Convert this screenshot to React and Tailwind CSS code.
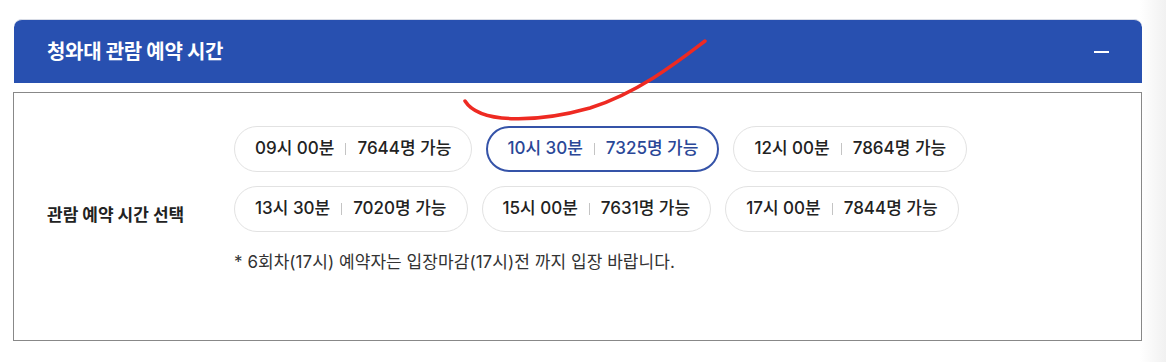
import React from "react";

const slots = [
  [
    { time: "09시 00분", count: "7644명 가능" },
    { time: "10시 30분", count: "7325명 가능", active: true },
    { time: "12시 00분", count: "7864명 가능" },
  ],
  [
    { time: "13시 30분", count: "7020명 가능" },
    { time: "15시 00분", count: "7631명 가능" },
    { time: "17시 00분", count: "7844명 가능" },
  ],
];

function Slot({ time, count, active }) {
  return (
    <button
      className={
        active
          ? "h-[46px] px-[19px] rounded-full border-2 border-[#3553a8] bg-white text-[#2a4797] flex items-center text-[17px] font-medium"
          : "h-[46px] px-5 rounded-full border border-[#e2e2e2] bg-white text-[#222] flex items-center text-[17px] font-medium"
      }
    >
      <span>{time}</span>
      <span className="mx-[11px] w-px h-[12px] bg-[#c4c4c4]" />
      <span>{count}</span>
    </button>
  );
}

export default function App() {
  return (
    <div
      className="relative w-[1166px] h-[362px] bg-white overflow-hidden"
      style={{ fontFamily: '"Inter", "Noto Sans CJK KR", sans-serif' }}
    >
      <div className="absolute right-0 top-0 w-[26px] h-full bg-gradient-to-r from-white to-[#f1f1f1]" />
      <div className="relative pt-[19px] pl-[13px] w-[1142px]">
        {/* Header */}
        <div className="ml-px h-[64px] bg-[#2850b0] rounded-t-[8px] border-t border-[#d8dce6] flex items-center justify-between pl-[33px] pr-[33px]">
          <h2 className="text-white text-[20px] font-bold tracking-[-0.3px]">청와대 관람 예약 시간</h2>
          <span className="block w-[15px] h-[2px] bg-white" />
        </div>

        {/* Body */}
        <div className="mt-[9px] h-[249px] border border-[#888] flex pt-[33px] pl-[33px]">
          <div className="w-[187px] pt-[77px] text-[17px] font-bold text-[#222] leading-[24px]">
            관람 예약 시간 선택
          </div>
          <div className="flex flex-col">
            <div className="flex flex-col gap-[14px]">
              {slots.map((row, i) => (
                <div key={i} className="flex gap-[14px]">
                  {row.map((s) => (
                    <Slot key={s.time} {...s} />
                  ))}
                </div>
              ))}
            </div>
            <p className="mt-[18px] text-[17px] text-[#333] leading-[24px] tracking-[0.05px]">
              * 6회차(17시) 예약자는 입장마감(17시)전 까지 입장 바랍니다.
            </p>
          </div>
        </div>
      </div>

      {/* red annotation stroke */}
      <svg className="absolute left-0 top-0 pointer-events-none" width="1166" height="362">
        <path
          d="M465 101 C 480 125, 540 122, 590 108 C 640 92, 680 60, 705 41"
          fill="none"
          stroke="#ee2a22"
          strokeWidth="3.5"
          strokeLinecap="round"
        />
      </svg>
    </div>
  );
}
